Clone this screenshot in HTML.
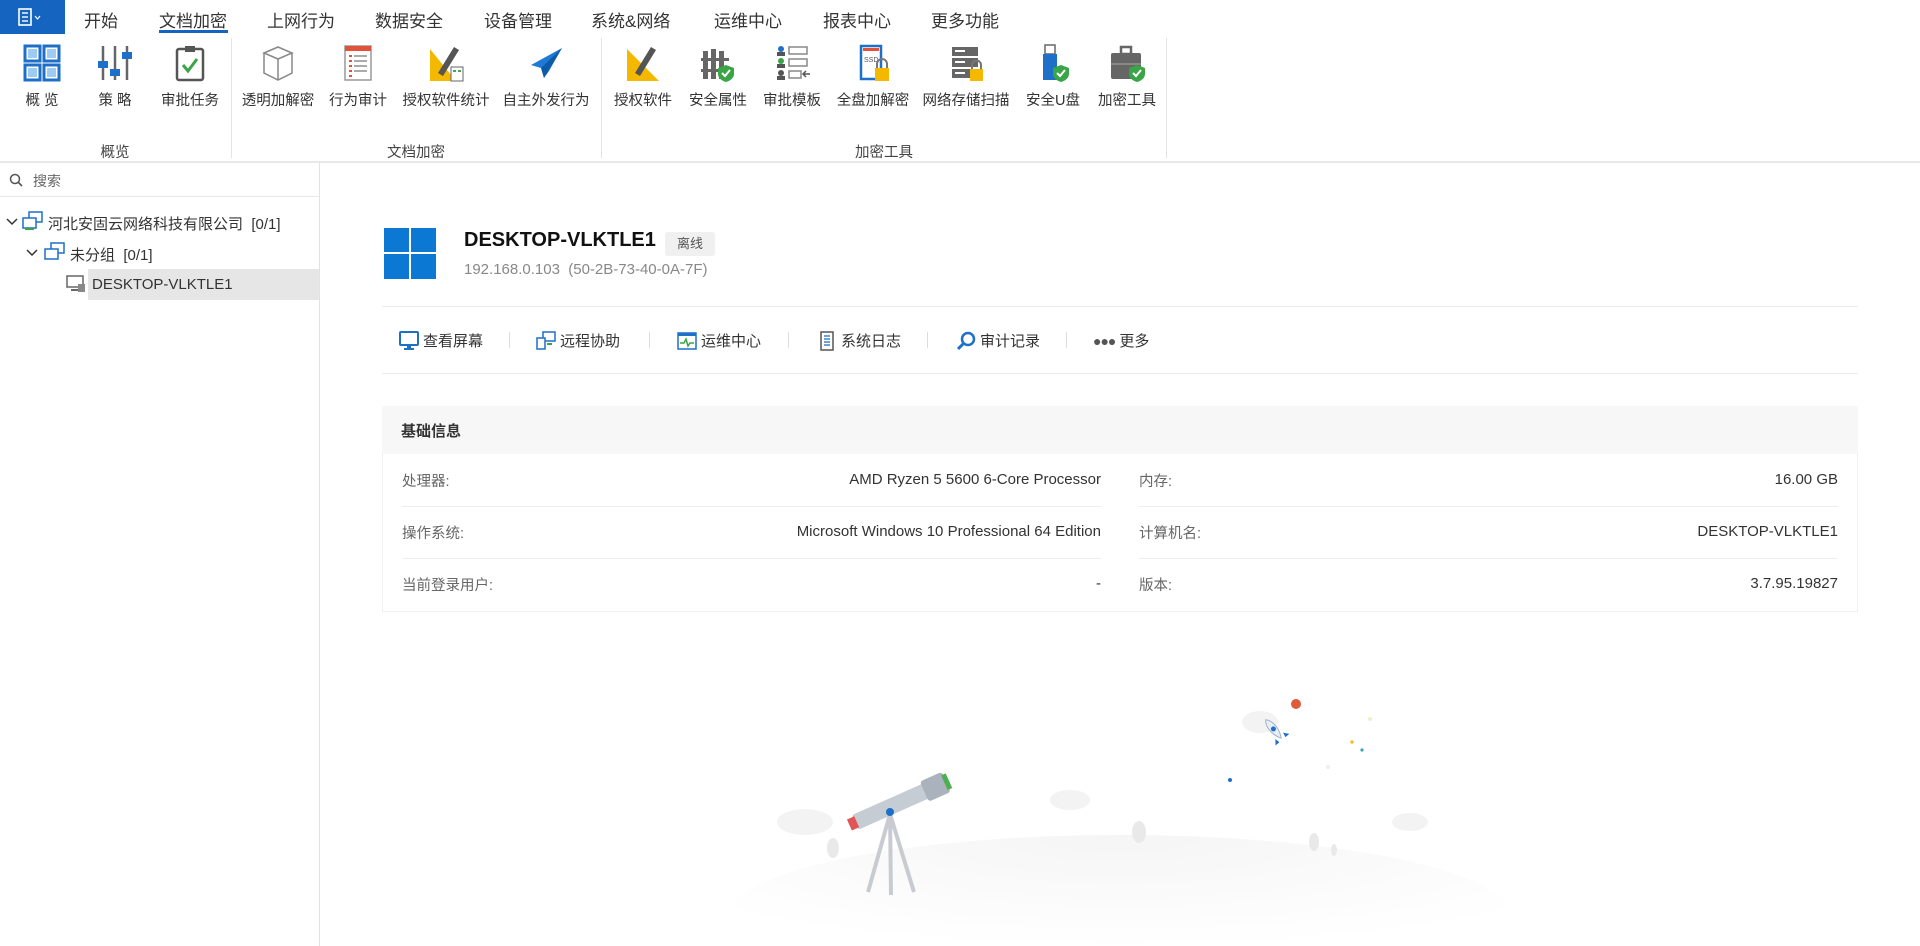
<!DOCTYPE html>
<html><head><meta charset="utf-8"><style>
*{box-sizing:border-box;margin:0;padding:0}
body{width:1920px;height:946px;overflow:hidden;background:#fff;font-family:"Liberation Sans","Noto Sans CJK SC",sans-serif;color:#333;position:relative}
.abs{position:absolute}
.tab{position:absolute;top:7px;font-size:17px;color:#333;white-space:nowrap}
.ri{position:absolute;top:43px;width:90px;margin-left:-45px;text-align:center}
.ri svg{display:block;margin:0 auto;width:40px;height:40px}
.ri span{display:block;margin-top:6px;font-size:14.5px;color:#333;white-space:nowrap}
.gl{position:absolute;top:141px;font-size:14.5px;color:#444;transform:translateX(-50%)}
.sep{position:absolute;top:38px;width:1px;height:120px;background:#e4e4e4}
.act{position:absolute;top:330px;font-size:15px;color:#333;display:flex;align-items:center;gap:4px;white-space:nowrap}
.asep{position:absolute;top:332px;width:1px;height:16px;background:#ddd}
.lab{position:absolute;font-size:14.5px;color:#666}
.val{position:absolute;font-size:15px;color:#333;text-align:right}
.rl{position:absolute;height:1px;background:#eee}
</style></head><body>
<div class="abs" style="left:0;top:0;width:65px;height:34px;background:#1565c0"></div>
<svg class="abs" style="left:18px;top:8px" width="28" height="18" viewBox="0 0 28 18"><rect x="1" y="1" width="12" height="16" fill="none" stroke="#fff" stroke-width="1.6"/><line x1="4" y1="5" x2="10" y2="5" stroke="#fff" stroke-width="1.4"/><line x1="4" y1="9" x2="10" y2="9" stroke="#fff" stroke-width="1.4"/><line x1="4" y1="13" x2="10" y2="13" stroke="#fff" stroke-width="1.4"/><path d="M17 8l2.5 3 2.5-3" fill="none" stroke="#fff" stroke-width="1.2"/></svg>
<div class="tab" style="left:84px">开始</div>
<div class="tab" style="left:159px">文档加密</div>
<div class="abs" style="left:159px;top:30px;width:69px;height:3px;background:#1565c0"></div>
<div class="tab" style="left:267px">上网行为</div>
<div class="tab" style="left:375px">数据安全</div>
<div class="tab" style="left:484px">设备管理</div>
<div class="tab" style="left:591px">系统&amp;网络</div>
<div class="tab" style="left:714px">运维中心</div>
<div class="tab" style="left:823px">报表中心</div>
<div class="tab" style="left:931px">更多功能</div>

<div class="ri" style="left:42px"><svg viewBox="0 0 40 40"><g fill="none" stroke="#1e6fc8" stroke-width="3"><rect x="3" y="3" width="15" height="15"/><rect x="22" y="3" width="15" height="15"/><rect x="3" y="22" width="15" height="15"/><rect x="22" y="22" width="15" height="15"/></g><g fill="#9ecbf2"><rect x="6" y="6" width="9" height="9"/><rect x="25" y="6" width="9" height="9"/><rect x="6" y="25" width="9" height="9"/><rect x="25" y="25" width="9" height="9"/></g></svg><span>概 览</span></div>
<div class="ri" style="left:115px"><svg viewBox="0 0 40 40"><g stroke="#666" stroke-width="2.5"><line x1="8" y1="3" x2="8" y2="37"/><line x1="20" y1="3" x2="20" y2="37"/><line x1="32" y1="3" x2="32" y2="37"/></g><rect x="3" y="18" width="10" height="7" fill="#1e6fc8"/><rect x="15" y="26" width="10" height="7" fill="#1e6fc8"/><rect x="27" y="9" width="10" height="7" fill="#1e6fc8"/></svg><span>策 略</span></div>
<div class="ri" style="left:190px"><svg viewBox="0 0 40 40"><rect x="7" y="6" width="26" height="31" rx="2" fill="#fff" stroke="#555" stroke-width="2.5"/><rect x="15" y="3" width="10" height="6" fill="#555"/><path d="M13 22l5 6 9-12" fill="none" stroke="#3aa546" stroke-width="3"/></svg><span>审批任务</span></div>
<div class="ri" style="left:278px"><svg viewBox="0 0 40 40"><g fill="none" stroke="#888" stroke-width="1.5"><path d="M6 10l14-6 14 6-14 6z"/><path d="M6 10v20l14 7 14-7V10"/><path d="M20 16v21"/></g></svg><span>透明加解密</span></div>
<div class="ri" style="left:358px"><svg viewBox="0 0 40 40"><rect x="7" y="3" width="26" height="34" fill="#fff" stroke="#999" stroke-width="1.5"/><rect x="7" y="3" width="26" height="5" fill="#e0533a"/><g stroke="#e0533a" stroke-width="2"><line x1="11" y1="13" x2="14" y2="13"/><line x1="11" y1="18" x2="14" y2="18"/><line x1="11" y1="23" x2="14" y2="23"/><line x1="11" y1="28" x2="14" y2="28"/><line x1="11" y1="33" x2="14" y2="33"/></g><g stroke="#aaa" stroke-width="2"><line x1="16" y1="13" x2="29" y2="13"/><line x1="16" y1="18" x2="29" y2="18"/><line x1="16" y1="23" x2="29" y2="23"/><line x1="16" y1="28" x2="29" y2="28"/></g></svg><span>行为审计</span></div>
<div class="ri" style="left:446px"><svg viewBox="0 0 40 40"><path d="M4 6v32h26z" fill="#f5b800"/><path d="M12 30l16-26 5 3-16 26z" fill="#555"/><rect x="25" y="24" width="12" height="14" fill="#fff" stroke="#666"/><g fill="#4aa64a"><rect x="27" y="27" width="3" height="2"/><rect x="32" y="27" width="3" height="2"/></g></svg><span>授权软件统计</span></div>
<div class="ri" style="left:546px"><svg viewBox="0 0 40 40"><path d="M36 5L5 22l10 3 3 10 5-7z" fill="#1e7ad6"/><path d="M36 5L15 25l3 10z" fill="#0d5ba8"/></svg><span>自主外发行为</span></div>
<div class="ri" style="left:643px"><svg viewBox="0 0 40 40"><path d="M4 6v32h32z" fill="#f5b800"/><path d="M12 30l16-26 5 3-16 26z" fill="#555"/></svg><span>授权软件</span></div>
<div class="ri" style="left:718px"><svg viewBox="0 0 40 40"><g fill="#666"><rect x="5" y="8" width="5" height="28"/><rect x="13" y="6" width="5" height="30"/><rect x="21" y="8" width="5" height="28"/><rect x="3" y="15" width="28" height="3"/><rect x="3" y="26" width="28" height="3"/></g><path d="M28 22l8 3v6c0 4-4 7-8 8-4-1-8-4-8-8v-6z" fill="#3aa546"/><path d="M24 30l3 3 5-6" fill="none" stroke="#fff" stroke-width="2"/></svg><span>安全属性</span></div>
<div class="ri" style="left:792px"><svg viewBox="0 0 40 40"><g fill="#1e6fc8"><circle cx="9" cy="6" r="3"/></g><g fill="#3aa546"><circle cx="9" cy="18" r="3"/></g><g fill="#555"><circle cx="9" cy="30" r="3"/><rect x="5" y="9" width="8" height="4"/><rect x="5" y="21" width="8" height="4"/><rect x="5" y="33" width="8" height="4"/></g><g fill="none" stroke="#888" stroke-width="1.5"><rect x="17" y="4" width="18" height="7"/><rect x="17" y="16" width="18" height="7"/><rect x="17" y="28" width="12" height="7"/></g><path d="M38 31h-7m3-3l-3 3 3 3" stroke="#555" fill="none" stroke-width="1.5"/></svg><span>审批模板</span></div>
<div class="ri" style="left:873px"><svg viewBox="0 0 40 40"><rect x="8" y="3" width="20" height="33" fill="#fff" stroke="#1e6fc8" stroke-width="2.5"/><rect x="10" y="5" width="16" height="3" fill="#e0533a"/><text x="11" y="19" font-size="7" fill="#555" font-family="Liberation Sans">SSD</text><rect x="22" y="25" width="14" height="13" fill="#f5b800"/><path d="M24 25v-4a5 5 0 0 1 10 0v4" fill="none" stroke="#777" stroke-width="2"/></svg><span>全盘加解密</span></div>
<div class="ri" style="left:966px"><svg viewBox="0 0 40 40"><g fill="#666"><rect x="6" y="4" width="26" height="9"/><rect x="6" y="15" width="26" height="9"/><rect x="6" y="26" width="26" height="9"/></g><g fill="#fff"><rect x="9" y="7" width="10" height="2"/><rect x="9" y="18" width="10" height="2"/><rect x="9" y="29" width="10" height="2"/></g><rect x="24" y="26" width="13" height="12" fill="#f5b800"/><path d="M26 26v-4a4.5 4.5 0 0 1 9 0v4" fill="none" stroke="#777" stroke-width="2"/></svg><span>网络存储扫描</span></div>
<div class="ri" style="left:1053px"><svg viewBox="0 0 40 40"><rect x="12" y="2" width="10" height="9" fill="#fff" stroke="#666" stroke-width="1.5"/><rect x="10" y="11" width="14" height="26" fill="#1e6fc8"/><path d="M28 22l8 3v6c0 4-4 7-8 8-4-1-8-4-8-8v-6z" fill="#3aa546"/><path d="M24 30l3 3 5-6" fill="none" stroke="#fff" stroke-width="2"/></svg><span>安全U盘</span></div>
<div class="ri" style="left:1127px"><svg viewBox="0 0 40 40"><rect x="4" y="10" width="30" height="26" rx="2" fill="#666"/><rect x="14" y="4" width="10" height="7" fill="none" stroke="#666" stroke-width="2.5"/><rect x="4" y="20" width="30" height="2" fill="#888"/><path d="M30 22l8 3v6c0 4-4 7-8 8-4-1-8-4-8-8v-6z" fill="#3aa546"/><path d="M26 30l3 3 5-6" fill="none" stroke="#fff" stroke-width="2"/></svg><span>加密工具</span></div>
<div class="gl" style="left:115px">概览</div>
<div class="gl" style="left:416px">文档加密</div>
<div class="gl" style="left:884px">加密工具</div>
<div class="sep" style="left:231px"></div>
<div class="sep" style="left:601px"></div>
<div class="sep" style="left:1166px"></div>
<div class="abs" style="left:0;top:161px;width:1920px;height:2px;background:#e8e8e8"></div>

<div class="abs" style="left:319px;top:163px;width:1px;height:783px;background:#e2e2e2"></div>
<svg class="abs" style="left:9px;top:173px" width="14" height="14" viewBox="0 0 14 14"><circle cx="6" cy="6" r="4.5" fill="none" stroke="#555" stroke-width="1.5"/><line x1="9.5" y1="9.5" x2="13" y2="13" stroke="#555" stroke-width="1.6"/></svg>
<div class="abs" style="left:33px;top:171px;font-size:14px;color:#666">搜索</div>
<div class="abs" style="left:0;top:196px;width:319px;height:1px;background:#e8e8e8"></div>
<svg class="abs" style="left:6px;top:218px" width="12" height="8" viewBox="0 0 12 8"><path d="M1 1l5 5 5-5" fill="none" stroke="#333" stroke-width="1.5"/></svg>
<svg class="abs" style="left:22px;top:211px" width="22" height="20" viewBox="0 0 22 20"><rect x="7" y="1" width="13" height="10" fill="#fff" stroke="#1e6fc8" stroke-width="1.5"/><rect x="1" y="7" width="13" height="10" fill="#fff" stroke="#1e6fc8" stroke-width="1.5"/><rect x="3" y="17" width="9" height="2" fill="#3aa546"/></svg>
<div class="abs" style="left:48px;top:213px;font-size:15px;color:#333">河北安固云网络科技有限公司&nbsp; [0/1]</div>
<svg class="abs" style="left:26px;top:249px" width="12" height="8" viewBox="0 0 12 8"><path d="M1 1l5 5 5-5" fill="none" stroke="#333" stroke-width="1.5"/></svg>
<svg class="abs" style="left:44px;top:242px" width="22" height="20" viewBox="0 0 22 20"><rect x="7" y="1" width="13" height="10" fill="#fff" stroke="#1e6fc8" stroke-width="1.5"/><rect x="1" y="7" width="13" height="10" fill="#fff" stroke="#1e6fc8" stroke-width="1.5"/></svg>
<div class="abs" style="left:70px;top:244px;font-size:15px;color:#333">未分组&nbsp; [0/1]</div>
<div class="abs" style="left:88px;top:269px;width:231px;height:31px;background:#e6e6e6"></div>
<svg class="abs" style="left:66px;top:275px" width="20" height="18" viewBox="0 0 20 18"><rect x="1" y="1" width="16" height="11" fill="#fff" stroke="#666" stroke-width="1.5"/><rect x="5" y="14" width="8" height="2" fill="#666"/><rect x="12" y="9" width="7" height="8" fill="#888"/></svg>
<div class="abs" style="left:92px;top:276px;font-size:15px;color:#333">DESKTOP-VLKTLE1</div>

<svg class="abs" style="left:384px;top:228px" width="52" height="51" viewBox="0 0 52 51"><g fill="#0b78d4"><rect x="0" y="0" width="25" height="24"/><rect x="27" y="0" width="25" height="24"/><rect x="0" y="26" width="25" height="25"/><rect x="27" y="26" width="25" height="25"/></g></svg>
<div class="abs" style="left:464px;top:229px;font-size:20px;font-weight:bold;color:#111">DESKTOP-VLKTLE1</div>
<div class="abs" style="left:665px;top:232px;width:50px;height:24px;background:#f0f0f0;border-radius:3px;font-size:13px;color:#555;text-align:center;line-height:24px">离线</div>
<div class="abs" style="left:464px;top:261px;font-size:15px;color:#888">192.168.0.103&nbsp; (50-2B-73-40-0A-7F)</div>
<div class="abs" style="left:382px;top:306px;width:1476px;height:1px;background:#ebebeb"></div>

<div class="act" style="left:399px"><svg width="20" height="20" viewBox="0 0 20 20"><rect x="1" y="1" width="18" height="13" rx="1" fill="#fff" stroke="#1e6fc8" stroke-width="2"/><rect x="8" y="14" width="4" height="3" fill="#1e6fc8"/><rect x="5" y="17" width="10" height="2" fill="#1e6fc8"/></svg>查看屏幕</div>
<div class="asep" style="left:509px"></div>
<div class="act" style="left:536px"><svg width="20" height="20" viewBox="0 0 20 20"><rect x="7" y="1" width="12" height="9" fill="#fff" stroke="#1e6fc8" stroke-width="1.5"/><rect x="1" y="7" width="8" height="11" fill="#fff" stroke="#1e6fc8" stroke-width="1.5"/><rect x="11" y="12" width="5" height="2" fill="#3aa546"/></svg>远程协助</div>
<div class="asep" style="left:649px"></div>
<div class="act" style="left:677px"><svg width="20" height="20" viewBox="0 0 20 20"><rect x="1" y="2" width="18" height="16" fill="#fff" stroke="#1e6fc8" stroke-width="1.5"/><rect x="1" y="2" width="18" height="3" fill="#1e6fc8"/><path d="M3 12h4l2-4 2 7 2-3h4" fill="none" stroke="#3aa546" stroke-width="1.5"/></svg>运维中心</div>
<div class="asep" style="left:788px"></div>
<div class="act" style="left:817px"><svg width="20" height="20" viewBox="0 0 20 20"><rect x="4" y="1" width="12" height="18" fill="#fff" stroke="#555" stroke-width="1.5"/><g stroke="#1e6fc8" stroke-width="1.3"><line x1="7" y1="5" x2="13" y2="5"/><line x1="7" y1="8" x2="13" y2="8"/><line x1="7" y1="11" x2="13" y2="11"/><line x1="7" y1="14" x2="13" y2="14"/></g></svg>系统日志</div>
<div class="asep" style="left:927px"></div>
<div class="act" style="left:956px"><svg width="20" height="20" viewBox="0 0 20 20"><circle cx="12" cy="8" r="6" fill="none" stroke="#1e6fc8" stroke-width="2.5"/><line x1="8" y1="12" x2="2" y2="18" stroke="#1e6fc8" stroke-width="3"/></svg>审计记录</div>
<div class="asep" style="left:1066px"></div>
<div class="act" style="left:1093px"><span style="color:#555;font-size:14px;letter-spacing:-1px">●●●</span>更多</div>
<div class="abs" style="left:382px;top:373px;width:1476px;height:1px;background:#ebebeb"></div>

<div class="abs" style="left:382px;top:406px;width:1476px;height:206px;border:1px solid #f0f0f0"></div>
<div class="abs" style="left:382px;top:406px;width:1476px;height:48px;background:#f7f7f7"></div>
<div class="abs" style="left:401px;top:420px;font-size:15px;font-weight:bold;color:#333">基础信息</div>
<div class="lab" style="left:402px;top:470px">处理器:</div>
<div class="val" style="right:819px;top:471px">AMD Ryzen 5 5600 6-Core Processor</div>
<div class="lab" style="left:1139px;top:470px">内存:</div>
<div class="val" style="right:82px;top:471px">16.00 GB</div>
<div class="rl" style="left:402px;top:506px;width:699px"></div>
<div class="rl" style="left:1139px;top:506px;width:699px"></div>
<div class="lab" style="left:402px;top:522px">操作系统:</div>
<div class="val" style="right:819px;top:523px">Microsoft Windows 10 Professional 64 Edition</div>
<div class="lab" style="left:1139px;top:522px">计算机名:</div>
<div class="val" style="right:82px;top:523px">DESKTOP-VLKTLE1</div>
<div class="rl" style="left:402px;top:558px;width:699px"></div>
<div class="rl" style="left:1139px;top:558px;width:699px"></div>
<div class="lab" style="left:402px;top:574px">当前登录用户:</div>
<div class="val" style="right:819px;top:575px">-</div>
<div class="lab" style="left:1139px;top:574px">版本:</div>
<div class="val" style="right:82px;top:575px">3.7.95.19827</div>

<svg class="abs" style="left:720px;top:680px" width="800" height="266" viewBox="0 0 800 266">
<defs><radialGradient id="g" cx="50%" cy="0%" r="70%"><stop offset="0" stop-color="#f5f5f5"/><stop offset="1" stop-color="#fff"/></radialGradient></defs>
<ellipse cx="400" cy="235" rx="390" ry="80" fill="url(#g)"/>
<g fill="#f3f3f3"><ellipse cx="85" cy="142" rx="28" ry="13"/><ellipse cx="350" cy="120" rx="20" ry="10"/><ellipse cx="690" cy="142" rx="18" ry="9"/><ellipse cx="540" cy="42" rx="18" ry="11"/></g>
<g fill="#e9e9e9"><ellipse cx="113" cy="168" rx="6" ry="10"/><ellipse cx="419" cy="152" rx="7" ry="11"/><ellipse cx="594" cy="162" rx="5" ry="9"/><ellipse cx="614" cy="170" rx="3" ry="6"/></g>
<g stroke="#c8ccd2" stroke-width="4"><line x1="170" y1="134" x2="148" y2="212"/><line x1="170" y1="134" x2="194" y2="212"/><line x1="170" y1="134" x2="171" y2="215"/></g>
<g transform="rotate(-24 170 128)"><rect x="132" y="119" width="92" height="16" rx="3" fill="#c6ccd4"/><rect x="208" y="116" width="24" height="22" rx="3" fill="#aab2bd"/><rect x="126" y="121" width="8" height="12" fill="#e05656"/><rect x="230" y="119" width="5" height="16" fill="#4caf50"/></g>
<circle cx="170" cy="132" r="4" fill="#1e6fc8"/>
<circle cx="576" cy="24" r="5" fill="#e05a3a"/>
<g transform="rotate(-40 556 52)"><path d="M556 36c5 5 5 16 0 24-5-8-5-19 0-24z" fill="#e8eef6" stroke="#9fb4cc"/><circle cx="556" cy="48" r="2.5" fill="#1e6fc8"/><path d="M551 57l-4 5h5zm10 0l4 5h-5z" fill="#1e6fc8"/></g>
<circle cx="510" cy="100" r="2" fill="#1e6fc8"/><circle cx="608" cy="87" r="2" fill="#eee"/><circle cx="650" cy="39" r="2" fill="#f3ead0"/><circle cx="642" cy="70" r="1.6" fill="#3aa"/><circle cx="632" cy="62" r="1.6" fill="#f5b800"/>
</svg>
</body></html>
